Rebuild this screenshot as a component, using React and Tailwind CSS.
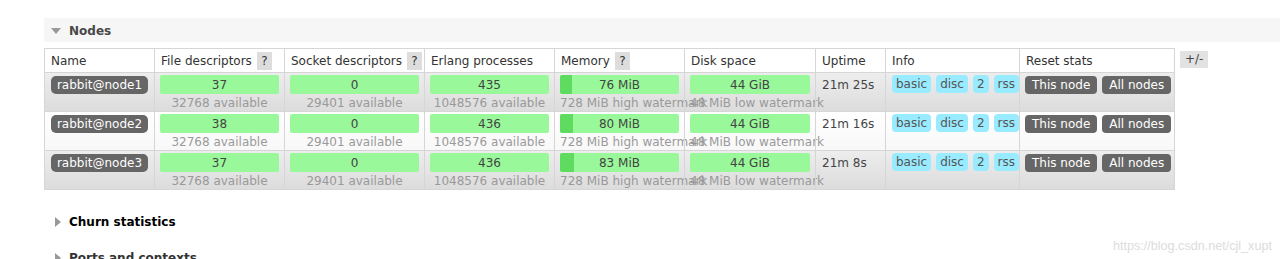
import React from "react";

const cols = [
  { label: "Name", w: "w-[109px]" },
  { label: "File descriptors", w: "w-[130px]", help: true },
  { label: "Socket descriptors", w: "w-[140px]", help: true },
  { label: "Erlang processes", w: "w-[130px]" },
  { label: "Memory", w: "w-[130px]", help: true },
  { label: "Disk space", w: "w-[131px]" },
  { label: "Uptime", w: "w-[70px]" },
  { label: "Info", w: "w-[134px]" },
  { label: "Reset stats", w: "w-[155px]" },
];

const nodes = [
  { name: "rabbit@node1", fd: "37", sock: "0", proc: "435", mem: 76, uptime: "21m 25s" },
  { name: "rabbit@node2", fd: "38", sock: "0", proc: "436", mem: 80, uptime: "21m 16s" },
  { name: "rabbit@node3", fd: "37", sock: "0", proc: "436", mem: 83, uptime: "21m 8s" },
];

function Bar({ value, sub, fill }) {
  return (
    <div className="flex flex-col">
      <div className="relative mt-[2px] h-[19px] rounded-[2px] bg-[#99f899] overflow-hidden">
        {fill != null && (
          <div className="absolute left-0 top-0 h-full bg-[#5fdc5f]" style={{ width: `${fill}%` }} />
        )}
        <div className="relative text-center leading-[20px] text-[#444]">{value}</div>
      </div>
      <div className="h-[17px] whitespace-nowrap text-center leading-[19px] text-[#999]">{sub}</div>
    </div>
  );
}

function Tag({ children }) {
  return (
    <span className="h-[18px] rounded-[4px] bg-[#99ebff] px-[4px] leading-[19px] text-[#555]">{children}</span>
  );
}

function Btn({ children }) {
  return (
    <span className="h-[18px] rounded-[4px] bg-[#666] px-[7px] leading-[19px] text-white">{children}</span>
  );
}

function Row({ n, shaded }) {
  return (
    <div
      className={`flex h-[39px] border-t border-[#d6d6d6] ${
        shaded ? "bg-gradient-to-b from-[#ededed] to-[#dcdcdc]" : "bg-gradient-to-b from-white to-[#f8f8f8]"
      }`}
    >
      <div className="w-[109px] pl-[6px] pt-[3px]">
        <span className="inline-block h-[18px] w-[97px] rounded-[5px] bg-[#666] text-center leading-[19px] text-white">
          {n.name}
        </span>
      </div>
      <div className="w-[130px] border-l border-[#d6d6d6] px-[5px]">
        <Bar value={n.fd} sub="32768 available" />
      </div>
      <div className="w-[140px] border-l border-[#d6d6d6] px-[5px]">
        <Bar value={n.sock} sub="29401 available" />
      </div>
      <div className="w-[130px] border-l border-[#d6d6d6] px-[5px]">
        <Bar value={n.proc} sub="1048576 available" />
      </div>
      <div className="w-[130px] border-l border-[#d6d6d6] px-[5px]">
        <Bar value={`${n.mem} MiB`} sub="728 MiB high watermark" fill={(n.mem / 728) * 100} />
      </div>
      <div className="w-[131px] border-l border-[#d6d6d6] px-[5px]">
        <Bar value="44 GiB" sub="48 MiB low watermark" />
      </div>
      <div className="w-[70px] border-l border-[#d6d6d6] pl-[6px] pt-[3px] leading-[19px] text-[#444]">
        {n.uptime}
      </div>
      <div className="flex w-[134px] items-start gap-[5px] border-l border-[#d6d6d6] pl-[6px] pt-[2px]">
        <Tag>basic</Tag>
        <Tag>disc</Tag>
        <Tag>2</Tag>
        <Tag>rss</Tag>
      </div>
      <div className="flex w-[155px] items-start gap-[5px] border-l border-[#d6d6d6] pl-[5px] pt-[3px]">
        <Btn>This node</Btn>
        <Btn>All nodes</Btn>
      </div>
    </div>
  );
}

export default function App() {
  return (
    <div className="relative h-[259px] w-[1280px] overflow-hidden bg-white font-['DejaVu_Sans',Verdana,sans-serif] text-[12px]">
      <div className="pl-[44px] pt-[18px]">
        {/* Nodes section */}
        <div className="flex h-[24px] items-center bg-[#f6f6f6] pt-[2px]">
          <span className="ml-[7px] h-0 w-0 border-x-[5px] border-t-[6px] border-x-transparent border-t-[#999]" />
          <span className="ml-[8px] font-bold text-[#484848]">Nodes</span>
        </div>

        <div className="mt-[6px] flex items-start">
          <div className="border border-[#d6d6d6]">
            <div className="flex h-[23px] bg-white text-[#333]">
              {cols.map((c, i) => (
                <div
                  key={c.label}
                  className={`${c.w} flex items-center gap-[5px] ${i ? "border-l border-[#d6d6d6]" : ""} pl-[6px]`}
                >
                  <span>{c.label}</span>
                  {c.help && (
                    <span className="inline-block h-[18px] w-[15px] bg-[#ddd] text-center leading-[18px] text-[#333]">?</span>
                  )}
                </div>
              ))}
            </div>
            {nodes.map((n, i) => (
              <Row key={n.name} n={n} shaded={i !== 1} />
            ))}
          </div>
          <span className="ml-[5px] mt-[3px] h-[17px] bg-[#e2e2e2] px-[5px] leading-[17px] text-[#444]">+/-</span>
        </div>

        {/* Collapsed sections */}
        <div className="mt-[20px] flex h-[24px] items-center">
          <span className="ml-[11px] h-0 w-0 border-y-[5px] border-l-[6px] border-y-transparent border-l-[#999]" />
          <span className="ml-[8px] font-bold text-black">Churn statistics</span>
        </div>
        <div className="mt-[12px] flex h-[24px] items-center">
          <span className="ml-[11px] h-0 w-0 border-y-[5px] border-l-[6px] border-y-transparent border-l-[#999]" />
          <span className="ml-[8px] font-bold text-[#333]">Ports and contexts</span>
        </div>
      </div>

      {/* watermark */}
      <span className="absolute left-[1113px] top-[237px] font-['Liberation_Sans',Arial,sans-serif] text-[12.6px] text-[#dcdcdc]">
        https://blog.csdn.net/cjl_xupt
      </span>
    </div>
  );
}
